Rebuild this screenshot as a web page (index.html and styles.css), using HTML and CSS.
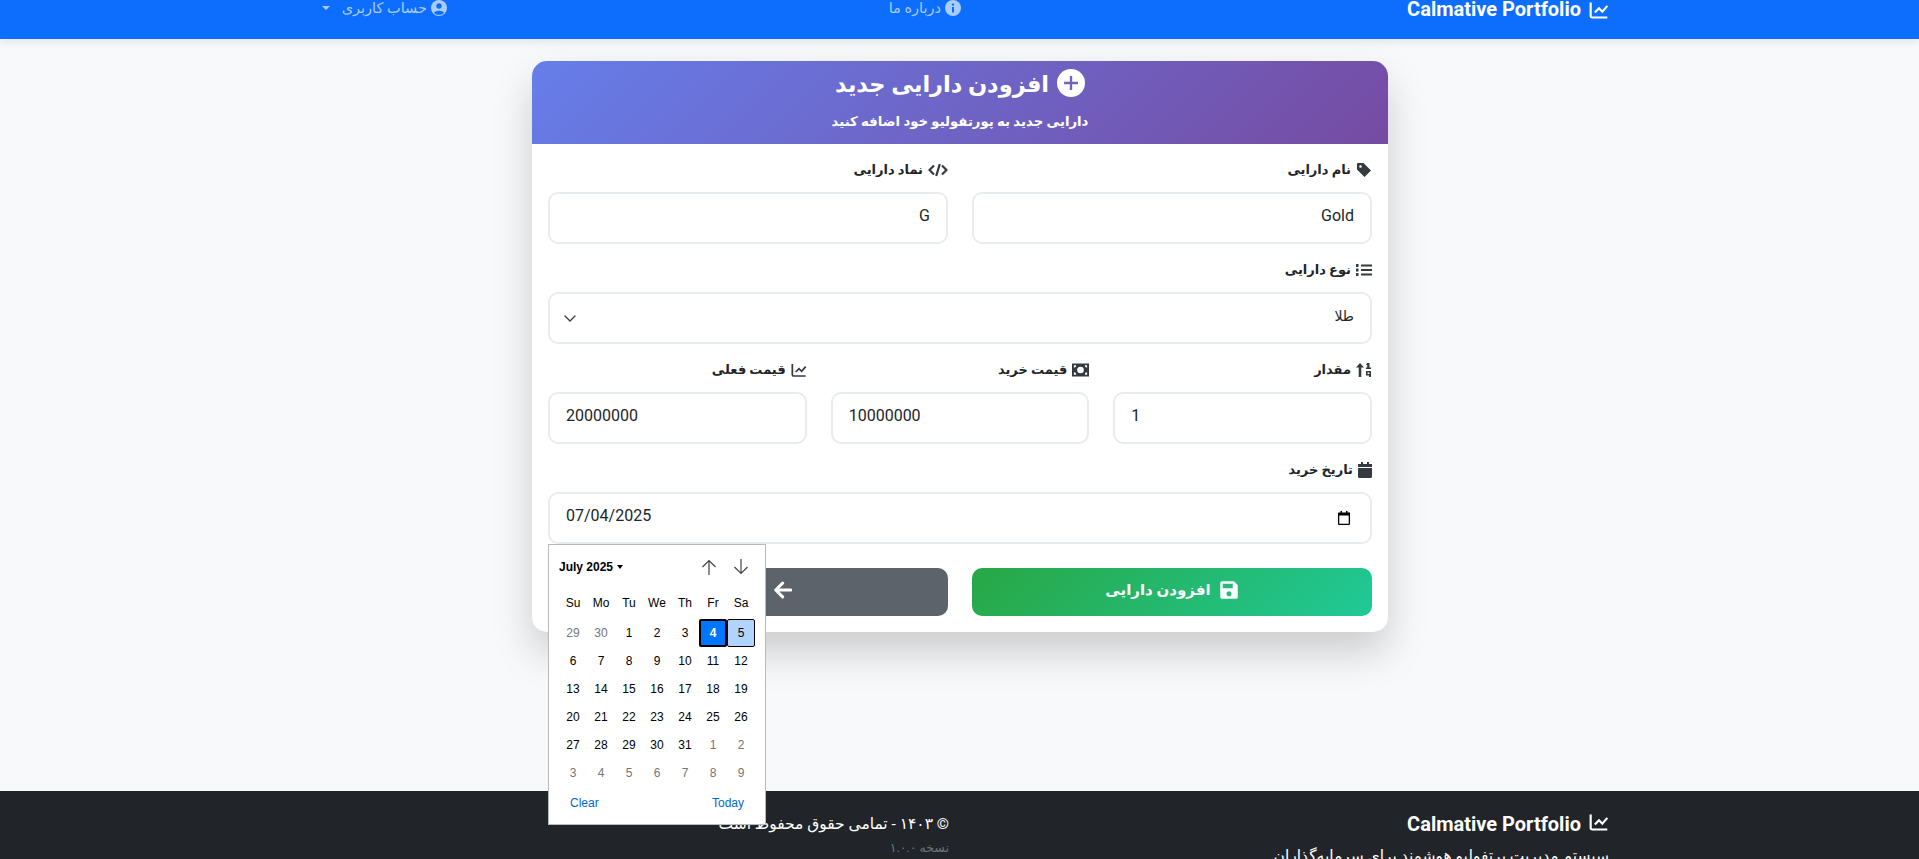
FILE: index.html
```html
<!DOCTYPE html>
<html lang="fa" dir="rtl">
<head>
  <meta charset="UTF-8">
  <title>Calmative Portfolio</title>
  <link rel="stylesheet" href="styles.css">
</head>
<body>
  <nav class="navbar">
    <a class="brand"><svg class="ico" viewBox="0 0 24 24"><path class="chart" d="M2 3v16a2 2 0 0 0 2 2h18M7 15l5-5 4 4 6-7"/></svg>Calmative Portfolio</a>
    <a class="nav-link"><svg class="ico-s" viewBox="0 0 16 16"><circle cx="8" cy="8" r="8" fill="currentColor"/><rect x="7" y="7" width="2" height="5.500" fill="#0d6efd"/><circle cx="8" cy="4.600" r="1.200" fill="#0d6efd"/></svg>درباره ما</a>
    <a class="nav-link"><svg class="ico-s" viewBox="0 0 16 16"><circle cx="8" cy="8" r="8" fill="currentColor"/><circle cx="8" cy="6" r="2.700" fill="#0d6efd"/><path d="M3 13c1-3 9-3 10 0a7 7 0 0 1-10 0z" fill="#0d6efd"/></svg>حساب کاربری<span class="caret"></span></a>
  </nav>

  <main class="content">
    <section class="card">
      <header class="card-head">
        <h1><svg class="ico-h" viewBox="0 0 24 24"><circle cx="12" cy="12" r="12" fill="#fff"/><path d="M11 6h2v5h5v2h-5v5h-2v-5H6v-2h5z" fill="#6f63bd"/></svg>افزودن دارایی جدید</h1>
        <p>دارایی جدید به پورتفولیو خود اضافه کنید</p>
      </header>
      <form class="card-body">
        <div class="row two">
          <div class="field">
            <label><svg class="ico-l" viewBox="0 0 16 16"><path fill="currentColor" d="M1 2a1 1 0 0 1 1-1h5.500L15 8.500 8.500 15 1 7.500zM4.500 3.200a1.300 1.300 0 1 0 0 2.600 1.300 1.300 0 0 0 0-2.600z"/></svg>نام دارایی</label>
            <div class="input" dir="rtl">Gold</div>
          </div>
          <div class="field">
            <label><svg class="ico-l wide" viewBox="0 0 20 16"><path fill="none" stroke="currentColor" stroke-width="2.200" d="M6 3.500 1.500 8 6 12.500M14 3.500 18.500 8 14 12.500M11.800 2 8.200 14"/></svg>نماد دارایی</label>
            <div class="input" dir="rtl">G</div>
          </div>
        </div>
        <div class="field">
          <label><svg class="ico-l" viewBox="0 0 16 16"><path fill="currentColor" d="M5 2.500h11v2H5zM5 7h11v2H5zM5 11.500h11v2H5zM0 2h2.500v3H0zM0 6.500h2.500v3H0zM0 11h2.500v3H0z"/></svg>نوع دارایی</label>
          <div class="input select">طلا<svg class="chev" viewBox="0 0 12 7"><path fill="none" stroke="#343a40" stroke-width="1.300" stroke-linecap="round" stroke-linejoin="round" d="m1 1 5 5 5-5"/></svg></div>
        </div>
        <div class="row three">
          <div class="field">
            <label><svg class="ico-l" viewBox="0 0 16 16"><path fill="currentColor" d="M4 1 8 5.500H5.300V15H2.700V5.500H0zM11 1h2.500v4.500H15V7h-5V5.500h1.200V3H10zM10 9h5v6h-2v-1.500h-3zm1.600 1.500v1.500h1.800v-1.500z"/></svg>مقدار</label>
            <div class="input" dir="ltr">1</div>
          </div>
          <div class="field">
            <label><svg class="ico-l money" viewBox="0 0 18 14"><path fill="currentColor" d="M0 0h18v14H0zm9 3.500a3.500 3.500 0 1 0 0 7 3.500 3.500 0 0 0 0-7zM2 2v2.500A2.500 2.500 0 0 0 4.500 2zm11.500 0A2.500 2.500 0 0 0 16 4.500V2zM2 9.500V12h2.500A2.500 2.500 0 0 0 2 9.500zm14 0a2.500 2.500 0 0 0-2.500 2.500H16z"/></svg>قیمت خرید</label>
            <div class="input" dir="ltr">10000000</div>
          </div>
          <div class="field">
            <label><svg class="ico-l" viewBox="0 0 24 24"><path class="chart" d="M2 3v16a2 2 0 0 0 2 2h18M7 15l5-5 4 4 6-7"/></svg>قیمت فعلی</label>
            <div class="input" dir="ltr">20000000</div>
          </div>
        </div>
        <div class="field">
          <label><svg class="ico-l narrow" viewBox="0 0 14 16"><path fill="currentColor" d="M3 0h2v2h4V0h2v2h3v3H0V2h3zM0 6h14v8.500a1.500 1.500 0 0 1-1.500 1.500h-11A1.500 1.500 0 0 1 0 14.500z"/></svg>تاریخ خرید</label>
          <div class="input date" dir="ltr"><span>07/04/2025</span><svg class="cal" viewBox="0 0 12 14"><path fill="#000" d="M2.500 0h1.500v1.500h4V0h1.500v1.500h1A1 1 0 0 1 12 2.500V13a1 1 0 0 1-1 1H1a1 1 0 0 1-1-1V2.500a1 1 0 0 1 1-1h1.500zM1.300 4.500v8.200h9.400V4.500z"/></svg></div>
        </div>
        <div class="row actions">
          <button type="button" class="btn btn-save"><svg class="ico" viewBox="0 0 16 16"><path fill="currentColor" d="M2 1h10l3 3v9.500a1.500 1.500 0 0 1-1.500 1.500h-11A1.500 1.500 0 0 1 1 13.500v-11A1.500 1.500 0 0 1 2 1zm1 2v3.500h8V3zm5 6a2 2 0 1 0 0 4 2 2 0 0 0 0-4z"/></svg>افزودن دارایی</button>
          <button type="button" class="btn btn-back"><svg class="ico" viewBox="0 0 16 16"><path fill="none" stroke="currentColor" stroke-width="2.400" stroke-linecap="round" stroke-linejoin="round" d="M8.500 2.500 3 8l5.500 5.500M3.500 8H15"/></svg>بازگشت</button>
        </div>
      </form>
    </section>
  </main>

  <footer class="footer">
    <div class="foot-col foot-brand">
      <h5><svg class="ico" viewBox="0 0 24 24"><path class="chart" d="M2 3v16a2 2 0 0 0 2 2h18M7 15l5-5 4 4 6-7"/></svg>Calmative Portfolio</h5>
      <p>سیستم مدیریت پرتفولیو هوشمند برای سرمایه‌گذاران</p>
    </div>
    <div class="foot-col foot-copy">
      <p>© ۱۴۰۳ - تمامی حقوق محفوظ است</p>
      <small>نسخه ۱.۰.۰</small>
    </div>
  </footer>

  <div class="picker" dir="ltr">
    <div class="picker-head">
      <span class="month">July 2025<span class="caret-b"></span></span>
      <span class="arrows">
        <svg viewBox="0 0 16 16"><path fill="none" stroke="#444" stroke-width="1.200" d="M8 16V1.500M1.500 8 8 1.500 14.500 8"/></svg>
        <svg viewBox="0 0 16 16"><path fill="none" stroke="#444" stroke-width="1.200" d="M8 0v14.500M1.500 8 8 14.500 14.500 8"/></svg>
      </span>
    </div>
    <div class="cal-grid" id="calGrid"></div>
    <div class="picker-foot"><a>Clear</a><a>Today</a></div>
  </div>

  <script>
    // july 2025 grid, starts at sun 29 june
    const grid = document.getElementById('calGrid');
    ['Su', 'Mo', 'Tu', 'We', 'Th', 'Fr', 'Sa'].forEach(d => {
      const el = document.createElement('b');
      el.textContent = d;
      grid.appendChild(el);
    });
    const days = [[29, true], [30, true]];
    for (let i = 1; i <= 31; i++) days.push([i, false]);
    for (let i = 1; i <= 9; i++) days.push([i, true]);
    days.forEach(([d, muted], i) => {
      const el = document.createElement('span');
      el.textContent = d;
      if (muted) el.className = 'muted';
      if (i === 5) el.className = 'selected';
      if (i === 6) el.className = 'today';
      grid.appendChild(el);
    });
  </script>
</body>
</html>
```

FILE: styles.css
```css
* {
  margin: 0;
  padding: 0;
  box-sizing: border-box;
}

body {
  font-family: Roboto, "DejaVu Sans", sans-serif;
  background-color: #f8f9fa;
  color: #212529;
  height: 859px;
  overflow: hidden;
  display: flex;
  flex-direction: column;
  position: relative;
}

.navbar {
  height: 39px;
  flex: none;
  background-color: #0d6efd;
  box-shadow: 0 2px 10px rgba(0, 0, 0, 0.1);
  position: relative;
  z-index: 1;
  display: grid;
  grid-template-columns: 648px 514px 1fr;
  padding-right: 310px;
}

.brand {
  color: white;
  font-size: 20px;
  font-weight: 700;
  line-height: 18px;
  display: flex;
  align-items: flex-start;
  gap: 8px;
}

.nav-link {
  color: rgba(255, 255, 255, 0.65);
  font-size: 14.500px;
  line-height: 18px;
  display: flex;
  align-items: flex-start;
  gap: 4px;
}

.ico {
  width: 20px;
  height: 20px;
  flex: none;
}

.chart {
  fill: none;
  stroke: currentColor;
  stroke-width: 2.600;
}

.ico-s {
  width: 16px;
  height: 16px;
  flex: none;
}

.caret {
  width: 0;
  height: 0;
  margin: 6px 8px 0 0;
  border: 4.800px solid transparent;
  border-top-color: currentColor;
  border-bottom: 0;
}

.content {
  flex: 1;
  display: flex;
  justify-content: center;
  padding-top: 22px;
  padding-left: 1px;
}

.card {
  width: 856px;
  height: 571px;
  background-color: white;
  border-radius: 15px;
  box-shadow: 0 20px 40px rgba(0, 0, 0, 0.18);
  overflow: hidden;
}

.card-head {
  height: 83px;
  background: linear-gradient(135deg, #667eea 0%, #764ba2 100%);
  color: white;
  text-align: center;
  padding-top: 6px;
}

.card-head h1 {
  font-size: 22.500px;
  font-weight: 700;
  line-height: 34px;
  display: flex;
  justify-content: center;
  align-items: center;
  gap: 8px;
}

.ico-h {
  width: 28px;
  height: 28px;
  margin-top: -3px;
}

.card-head p {
  font-size: 13.250px;
  font-weight: 700;
  line-height: 24px;
  margin-top: 9px;
}

.card-body {
  padding: 16px;
  display: flex;
  flex-direction: column;
  gap: 16px;
}

.row {
  display: grid;
  gap: 24px;
}

.row.two, .row.actions {
  grid-template-columns: 1fr 1fr;
}

.row.three {
  grid-template-columns: 1fr 1fr 1fr;
}

.field label {
  display: flex;
  align-items: center;
  gap: 5px;
  font-size: 13px;
  font-weight: 700;
  line-height: 20px;
  padding-bottom: 4px;
  margin-bottom: 8px;
}

.ico-l {
  width: 16px;
  height: 16px;
  flex: none;
  color: #343a40;
}

.ico-l.wide {
  width: 20px;
}

.ico-l.money {
  width: 17px;
  height: 14px;
}

.ico-l.narrow {
  width: 14px;
}

.input {
  display: block;
  width: 100%;
  height: 52px;
  padding: 10px 16px 14px;
  border: 2px solid #e9ecef;
  border-radius: 10px;
  background-color: white;
  font-size: 16px;
  line-height: 24px;
  color: #212529;
}

.select, .date {
  display: flex;
  justify-content: space-between;
  align-items: center;
}

.select {
  font-size: 14px;
}

.chev {
  width: 12px;
  height: 7px;
  margin: 4px -2px 0 -2px;
}

.cal {
  width: 12px;
  height: 14px;
  margin: 4px 4px 0 0;
}

.actions {
  margin-top: 8px;
}

.btn {
  height: 48px;
  border: none;
  border-radius: 10px;
  color: white;
  font-family: inherit;
  font-size: 15px;
  font-weight: 700;
  padding-bottom: 4px;
  display: flex;
  justify-content: center;
  align-items: center;
  gap: 8px;
}

.btn-save {
  background: linear-gradient(135deg, #28a745, #20c997);
}

.btn-back {
  background-color: #5c636a;
}

.footer {
  flex: none;
  height: 68px;
  background-color: #212529;
  color: white;
  display: grid;
  grid-template-columns: 660px 1fr;
  padding: 21px 310px 0 0;
  overflow: hidden;
}

.foot-brand h5 {
  font-size: 20px;
  font-weight: 700;
  line-height: 24px;
  display: flex;
  gap: 8px;
  margin-bottom: 8px;
}

.foot-brand p {
  font-size: 15.500px;
  line-height: 24px;
}

.foot-copy p {
  font-size: 15.500px;
  line-height: 24px;
}

.foot-copy small {
  display: block;
  margin-top: 4px;
  font-size: 12.500px;
  color: #6c757d;
}

/* native date popup, sits over the form */
.picker {
  position: absolute;
  left: 548px;
  top: 544px;
  width: 218px;
  height: 281px;
  background-color: white;
  border: 1px solid #bababa;
  font-family: "Liberation Sans", Arial, sans-serif;
  color: black;
  padding: 0 10px;
  z-index: 2;
}

.picker-head {
  height: 44px;
  display: flex;
  justify-content: space-between;
  align-items: center;
}

.month {
  font-size: 12px;
  font-weight: 700;
  display: flex;
  align-items: center;
  gap: 4px;
}

.caret-b {
  border: 3.500px solid transparent;
  border-top: 4px solid black;
  border-bottom: 0;
}

.arrows {
  display: flex;
  gap: 16px;
  margin-right: 6px;
}

.arrows svg {
  width: 16px;
  height: 16px;
}

.cal-grid {
  display: grid;
  grid-template-columns: repeat(7, 28px);
  grid-template-rows: 30px;
  grid-auto-rows: 28px;
}

.cal-grid b, .cal-grid span {
  display: flex;
  justify-content: center;
  align-items: center;
  font-size: 12px;
  font-weight: 400;
}

.cal-grid b {
  margin-bottom: 2px;
}

.cal-grid .muted {
  color: #767676;
}

.cal-grid .selected {
  background-color: #0075ff;
  color: white;
  font-weight: 700;
  border: 2px solid black;
  border-radius: 2px;
}

.cal-grid .today {
  background-color: #b0d4ff;
  border: 1px solid black;
  border-radius: 2px;
}

.picker-foot {
  display: flex;
  justify-content: space-between;
  padding: 9px 11px 0 11px;
  font-size: 12px;
  color: #0067d6;
}
```
